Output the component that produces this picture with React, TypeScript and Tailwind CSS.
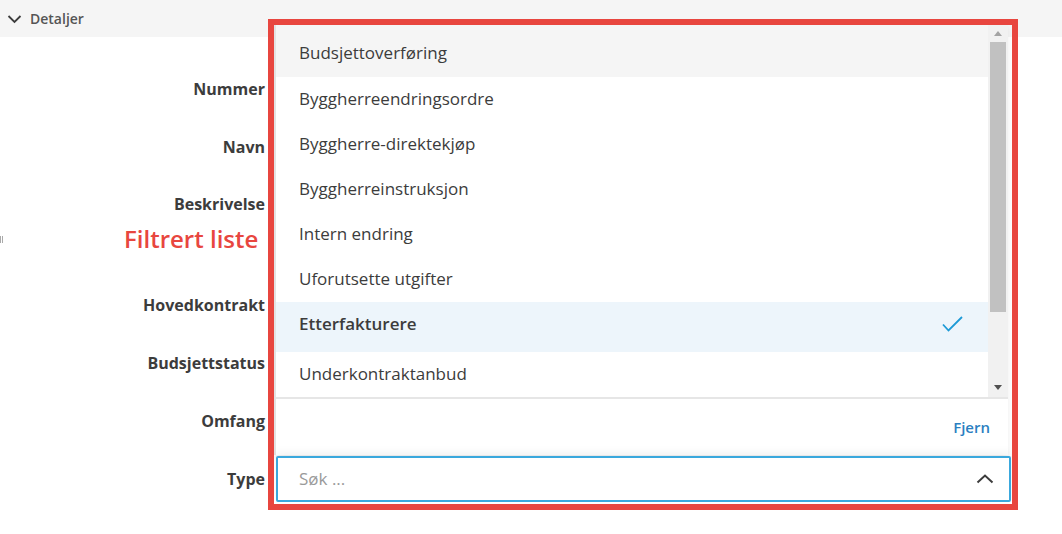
const font = { fontFamily: '"Open Sans", "Noto Sans", sans-serif' };

const labels = [
  { text: "Nummer", h: "h-[58px]", align: "items-center" },
  { text: "Navn", h: "h-[58px]", align: "items-center" },
  { text: "Beskrivelse", h: "h-[100px]", align: "items-start pt-[16px]" },
  { text: "Hovedkontrakt", h: "h-[58px]", align: "items-center" },
  { text: "Budsjettstatus", h: "h-[58px]", align: "items-center" },
  { text: "Omfang", h: "h-[58px]", align: "items-center" },
  { text: "Type", h: "h-[58px]", align: "items-center" },
];

const options = [
  { text: "Budsjettoverføring", h: "h-[52px] pt-[4px] bg-[#f5f5f5]" },
  { text: "Byggherreendringsordre", h: "h-[44px]" },
  { text: "Byggherre-direktekjøp", h: "h-[45px]" },
  { text: "Byggherreinstruksjon", h: "h-[45px]" },
  { text: "Intern endring", h: "h-[45px]" },
  { text: "Uforutsette utgifter", h: "h-[46px]" },
  { text: "Etterfakturere", h: "h-[50px] pb-[6px] bg-[#edf5fb] font-semibold", selected: true },
  { text: "Underkontraktanbud", h: "h-[45px] pb-[2px]" },
];

export default function App() {
  return (
    <div className="relative h-[534px] w-full overflow-hidden bg-white" style={font}>
      {/* section header */}
      <div className="flex h-[37px] items-center gap-[8px] bg-[#f5f5f5] pl-[7px]">
        <svg width="15" height="10" viewBox="0 0 15 10" fill="none">
          <path d="M1.5 2l6 6 6-6" stroke="#3c3c3c" strokeWidth="1.8" />
        </svg>
        <span className="text-[14px] font-semibold text-[#555]">Detaljer</span>
      </div>

      {/* form labels */}
      <div className="flex flex-col pt-[23px]">
        {labels.map((l) => (
          <div key={l.text} className={`flex w-[265px] justify-end ${l.h} ${l.align}`}>
            <span className="text-[16px] font-bold text-[#3c3c3c]">{l.text}</span>
          </div>
        ))}
      </div>

      {/* left grip */}
      <div className="absolute left-0 top-[236px] flex gap-[1px]">
        <span className="h-[7px] w-[1px] bg-[#aaa]" />
        <span className="h-[7px] w-[1px] bg-[#aaa]" />
      </div>

      {/* annotation label */}
      <div className="absolute left-[124px] top-[223px] text-[24px] font-semibold leading-[32px] text-[#e8463f]">
        Filtrert liste
      </div>

      {/* dropdown */}
      <div className="absolute left-[274px] top-[25px] flex h-[479px] w-[738px] flex-col">
        <div className="flex h-[430px] w-[734px] flex-col border-l-2 border-[#e3e3e3] bg-white shadow-[0_2px_6px_rgba(0,0,0,0.08)]">
          <div className="flex h-[374px] shrink-0 overflow-hidden border-b-2 border-[#e6e6e6]">
            <div className="flex flex-1 flex-col">
              {options.map((o) => (
                <div key={o.text} className={`flex shrink-0 items-center justify-between pl-[23px] pr-[25px] text-[17px] text-[#3c3c3c] ${o.h}`}>
                  <span>{o.text}</span>
                  {o.selected && (
                    <svg width="21" height="16" viewBox="0 0 21 16" fill="none">
                      <path d="M1 8.5l5.5 6L20 1" stroke="#1d9ad6" strokeWidth="1.8" />
                    </svg>
                  )}
                </div>
              ))}
            </div>
            {/* scrollbar */}
            <div className="flex w-[20px] flex-col items-center bg-[#f1f1f1]">
              <div className="flex h-[17px] items-center justify-center">
                <div className="h-0 w-0 border-x-[4px] border-b-[5px] border-x-transparent border-b-[#a3a3a3]" />
              </div>
              <div className="h-[270px] w-[16px] bg-[#c1c1c1]" />
              <div className="flex-1" />
              <div className="flex h-[20px] items-center justify-center">
                <div className="h-0 w-0 border-x-[4px] border-t-[5px] border-x-transparent border-t-[#505050]" />
              </div>
            </div>
          </div>
          <div className="flex flex-1 items-center justify-end pr-[18px]">
            <span className="text-[15px] font-semibold text-[#2b7fc1]">Fjern</span>
          </div>
        </div>
        <div className="ml-[2px] mt-[1px] flex h-[46px] w-[735px] items-center justify-between rounded-[2px] border-2 border-[#3aa8dd] bg-white pl-[21px] pr-[15px] shadow-[0_-4px_8px_rgba(0,0,0,0.05)]">
          <span className="text-[17px] text-[#9a9a9a]">Søk ...</span>
          <svg width="18" height="10" viewBox="0 0 18 10" fill="none">
            <path d="M1.5 8.5L9 1.5l7.5 7" stroke="#3c3c3c" strokeWidth="2" />
          </svg>
        </div>
      </div>

      {/* red annotation frame */}
      <div className="pointer-events-none absolute left-[268px] top-[19px] h-[491px] w-[750px] border-[6px] border-[#e8463f]" />
    </div>
  );
}
